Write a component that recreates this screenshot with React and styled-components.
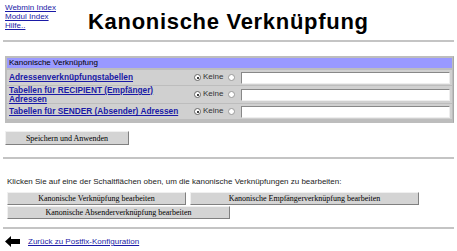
import React from "react";
import styled, { createGlobalStyle } from "styled-components";

const Global = createGlobalStyle`
  html, body { margin: 0; padding: 0; background: #fff; }
  body { font-family: "Liberation Sans", Arial, sans-serif; font-size: 8px; color: #000; }
`;

const Page = styled.div`
  width: 457px;
  padding: 3px 3px 0 3px;
  box-sizing: border-box;
`;

const Header = styled.div`
  display: flex;
  align-items: flex-start;
`;

const NavLinks = styled.div`
  display: flex;
  flex-direction: column;
  width: 83px;
  padding-left: 2px;
  line-height: 9px;
`;

const Link = styled.a`
  color: #1a1aa6;
  text-decoration: underline;
  font-size: ${(p) => (p.$bold ? "8.3px" : "8px")};
  font-weight: ${(p) => (p.$bold ? "bold" : "normal")};
`;

const Title = styled.h1`
  margin: 6px 0 0 0;
  font-size: 22px;
  font-weight: bold;
  line-height: 26px;
  letter-spacing: 0.7px;
`;

const Rule = styled.div`
  height: 2px;
  background: #c4c4c4;
  margin: ${(p) => p.$m || "0"};
`;

const Table = styled.div`
  margin: 14px 0 0 2px;
  border: 1px solid #bdbdbd;
  border-right-color: #a8a8a8;
  background: #bdbdbd;
  display: flex;
  flex-direction: column;
  gap: 1px;
  padding: 1px 1px 3px 1px;
`;

const TableHead = styled.div`
  background: #9999ff;
  height: 10px;
  line-height: 10px;
  padding-left: 2px;
  font-size: 8px;
  margin-bottom: 1px;
`;

const Row = styled.div`
  display: grid;
  grid-template-columns: 185px 1fr;
  align-items: center;
  background: #d0d0d0;
  height: ${(p) => p.$h || 15}px;
  padding-right: 2px;
`;

const Cell = styled.div`
  display: flex;
  align-items: center;
  line-height: 8.5px;
  padding-left: 2px;
`;

const Choice = styled.div`
  display: flex;
  align-items: center;
  color: #333;
`;

const Radio = styled.span`
  width: 5px;
  height: 5px;
  border-radius: 50%;
  border: 1px solid ${(p) => (p.$checked ? "#666" : "#999")};
  background: #fff;
  display: inline-flex;
  align-items: center;
  justify-content: center;
  margin: 0 ${(p) => p.$mr || 0}px 0 ${(p) => p.$ml || 0}px;
  &::after {
    content: "";
    width: 2px;
    height: 2px;
    border-radius: 50%;
    background: ${(p) => (p.$checked ? "#000" : "transparent")};
  }
`;

const Input = styled.div`
  flex: 1;
  height: 10px;
  background: #fff;
  border-top: 1px solid #888;
  border-left: 1px solid #888;
  border-bottom: 1px solid #eee;
  border-right: 1px solid #eee;
  margin-left: 6px;
`;

const Button = styled.button`
  font-family: "Liberation Serif", "Times New Roman", serif;
  font-size: 8px;
  background: #d4d4d4;
  border: 1px solid;
  border-color: #f0f0f0 #808080 #808080 #f0f0f0;
  height: ${(p) => p.$h || 14}px;
  padding: 0;
  width: ${(p) => p.$w}px;
  color: #000;
  cursor: pointer;
`;

const SaveWrap = styled.div`
  margin: 8px 0 0 2px;
  display: flex;
`;

const Info = styled.p`
  margin: 18px 0 0 4px;
  font-size: 8px;
  color: #222;
  line-height: 10px;
`;

const ButtonGrid = styled.div`
  display: flex;
  flex-wrap: wrap;
  gap: 1px 4px;
  margin: 5px 0 0 4px;
  width: 420px;
`;

const Back = styled.div`
  display: flex;
  align-items: center;
  gap: 8px;
  margin: 7px 0 0 2px;
`;

export default function App() {
  const choice = (
    <>
      <Choice><Radio $checked $mr={2} />Keine<Radio $ml={5} /></Choice>
      <Input />
    </>
  );
  return (
    <Page>
      <Global />
      <Header>
        <NavLinks>
          <Link href="#">Webmin Index</Link>
          <Link href="#">Modul Index</Link>
          <Link href="#">Hilfe..</Link>
        </NavLinks>
        <Title>Kanonische Verknüpfung</Title>
      </Header>
      <Rule $m="5px 0 0 0" />
      <Table>
        <TableHead>Kanonische Verknüpfung</TableHead>
        <Row $h={15}>
          <Cell><Link href="#" $bold>Adressenverknüpfungstabellen</Link></Cell>
          <Cell>{choice}</Cell>
        </Row>
        <Row $h={17}>
          <Cell><Link href="#" $bold>Tabellen für RECIPIENT (Empfänger) Adressen</Link></Cell>
          <Cell>{choice}</Cell>
        </Row>
        <Row $h={15}>
          <Cell><Link href="#" $bold>Tabellen für SENDER (Absender) Adressen</Link></Cell>
          <Cell>{choice}</Cell>
        </Row>
      </Table>
      <SaveWrap><Button $w={124}>Speichern und Anwenden</Button></SaveWrap>
      <Rule $m="12px 0 0 0" />
      <Info>Klicken Sie auf eine der Schaltflächen oben, um die kanonische Verknüpfungen zu bearbeiten:</Info>
      <ButtonGrid>
        <Button $w={179} $h={13}>Kanonische Verknüpfung bearbeiten</Button>
        <Button $w={229} $h={13}>Kanonische Empfängerverknüpfung bearbeiten</Button>
        <Button $w={223} $h={13}>Kanonische Absenderverknüpfung bearbeiten</Button>
      </ButtonGrid>
      <Rule $m="8px 0 0 0" />
      <Back>
        <svg width="15" height="11" viewBox="0 0 15 11">
          <path d="M0 5.5 L6 0 L6 3 L15 3 L15 8 L6 8 L6 11 Z" fill="#000" />
        </svg>
        <Link href="#">Zurück zu Postfix-Konfiguration</Link>
      </Back>
    </Page>
  );
}
